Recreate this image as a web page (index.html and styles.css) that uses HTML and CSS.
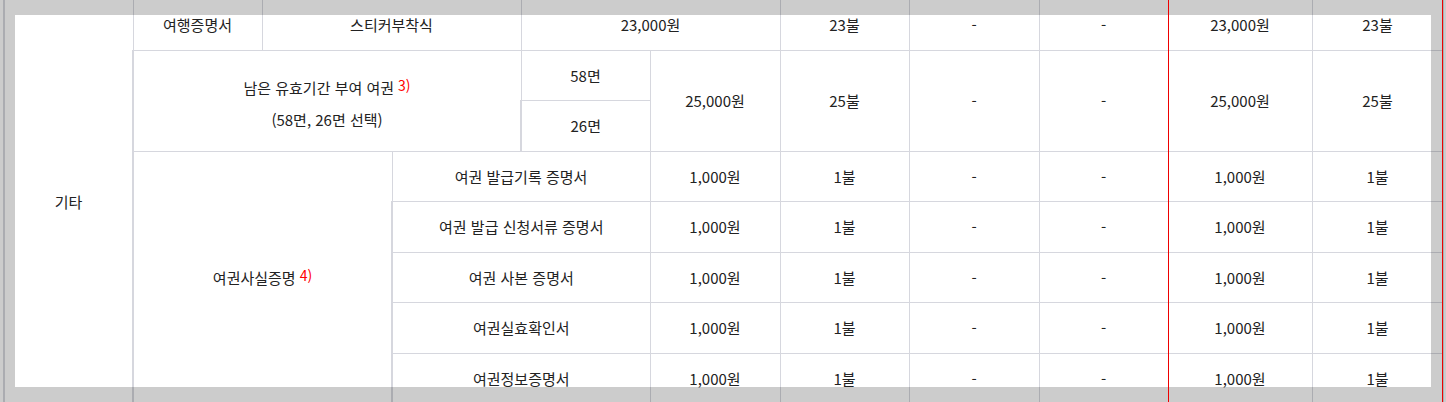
FILE: index.html
```html
<!DOCTYPE html>
<html lang="ko">
<head>
<meta charset="utf-8">
<title>여권 수수료</title>
<link rel="stylesheet" href="styles.css">
</head>
<body>
<div class="page">
  <table class="fee">
    <colgroup>
      <col class="c129"><col class="c129"><col class="c130"><col class="c129"><col class="c129"><col class="c130"><col class="c129"><col class="c130"><col class="c129"><col class="c144"><col class="c131">
    </colgroup>
    <tbody>
      <tr>
        <td rowspan="8">기타</td>
        <td>여행증명서</td>
        <td colspan="2">스티커부착식</td>
        <td colspan="2">23,000원</td>
        <td>23불</td>
        <td>-</td>
        <td>-</td>
        <td>23,000원</td>
        <td>23불</td>
      </tr>
      <tr>
        <td colspan="3" rowspan="2" class="multi">남은 유효기간 부여 여권<span class="note">3)</span><br>(58면, 26면 선택)</td>
        <td>58면</td>
        <td rowspan="2">25,000원</td>
        <td rowspan="2">25불</td>
        <td rowspan="2">-</td>
        <td rowspan="2">-</td>
        <td rowspan="2">25,000원</td>
        <td rowspan="2">25불</td>
      </tr>
      <tr>
        <td>26면</td>
      </tr>
      <tr>
        <td colspan="2" rowspan="5">여권사실증명<span class="note">4)</span></td>
        <td colspan="2">여권 발급기록 증명서</td>
        <td>1,000원</td>
        <td>1불</td>
        <td>-</td>
        <td>-</td>
        <td>1,000원</td>
        <td>1불</td>
      </tr>
      <tr>
        <td colspan="2">여권 발급 신청서류 증명서</td>
        <td>1,000원</td>
        <td>1불</td>
        <td>-</td>
        <td>-</td>
        <td>1,000원</td>
        <td>1불</td>
      </tr>
      <tr>
        <td colspan="2">여권 사본 증명서</td>
        <td>1,000원</td>
        <td>1불</td>
        <td>-</td>
        <td>-</td>
        <td>1,000원</td>
        <td>1불</td>
      </tr>
      <tr>
        <td colspan="2">여권실효확인서</td>
        <td>1,000원</td>
        <td>1불</td>
        <td>-</td>
        <td>-</td>
        <td>1,000원</td>
        <td>1불</td>
      </tr>
      <tr>
        <td colspan="2">여권정보증명서</td>
        <td>1,000원</td>
        <td>1불</td>
        <td>-</td>
        <td>-</td>
        <td>1,000원</td>
        <td>1불</td>
      </tr>
    </tbody>
  </table>
  <div class="spotlight"></div>
  <div class="guide guide-left"></div>
  <div class="guide guide-right"></div>
</div>
</body>
</html>
```

FILE: styles.css
```css
html, body {
  margin: 0;
  padding: 0;
  overflow: hidden;
  background: #ffffff;
}

body {
  font-family: "Noto Sans CJK KR", "Noto Sans", sans-serif;
  color: #222222;
  font-size: 15px;
}

.page {
  position: relative;
  width: 1446px;
  height: 402px;
  overflow: hidden;
  padding-left: 3px;
  box-sizing: border-box;
}

.fee {
  border-collapse: collapse;
  table-layout: fixed;
  width: 1440px;
  margin-top: -1px;
}

.c129 { width: 129px; }
.c130 { width: 130px; }
.c131 { width: 131px; }
.c144 { width: 144px; }

.fee tr {
  height: 50.5px;
}

.fee td {
  border: 1px solid #d6d7de;
  text-align: center;
  vertical-align: middle;
  padding: 1px 0 0;
  line-height: 20px;
}

.fee td:first-child {
  border-left-width: 2px;
}

.fee .multi {
  line-height: 31px;
  padding-top: 6px;
}

.note {
  color: #ff0000;
  font-size: 14px;
  margin-left: 4px;
  position: relative;
  top: -3px;
}

.spotlight {
  position: absolute;
  left: 15px;
  top: 15px;
  width: 1416px;
  height: 372px;
  box-shadow: 0 0 0 3000px rgba(0, 0, 0, 0.2);
  pointer-events: none;
}

.guide {
  position: absolute;
  top: 0;
  bottom: 0;
  width: 1px;
  background: #ee0000;
}

.guide-left { left: 1168px; }
.guide-right { left: 1442px; }
```
